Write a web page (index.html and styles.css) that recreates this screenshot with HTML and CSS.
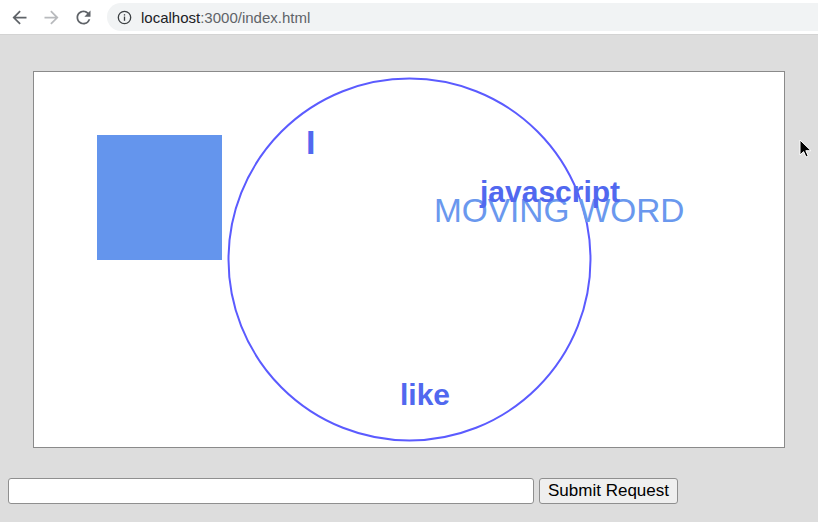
FILE: index.html
```html
<!DOCTYPE html>
<html>
<head>
<meta charset="utf-8">
<link rel="stylesheet" href="styles.css">
</head>
<body>
<div class="chrome">
  <div class="nav">
    <svg class="nav-icon" viewBox="0 0 24 24" width="21" height="21"><path fill="#5f6368" d="M20 11H7.83l5.59-5.59L12 4l-8 8 8 8 1.41-1.41L7.83 13H20v-2z"/></svg>
    <svg class="nav-icon" viewBox="0 0 24 24" width="21" height="21"><path fill="#b8babd" d="M4 11h12.17l-5.59-5.59L12 4l8 8-8 8-1.41-1.41L16.17 13H4v-2z"/></svg>
    <svg class="nav-icon" viewBox="0 0 24 24" width="21" height="21"><path fill="#5f6368" d="M17.65 6.35A7.958 7.958 0 0012 4c-4.42 0-7.99 3.58-7.99 8s3.57 8 7.99 8c3.730 0 6.84-2.55 7.73-6h-2.08A5.99 5.99 0 0112 18c-3.31 0-6-2.69-6-6s2.69-6 6-6c1.66 0 3.14.69 4.22 1.78L13 11h7V4l-2.35 2.35z"/></svg>
  </div>
  <div class="omnibox">
    <svg class="info" viewBox="0 0 16 16" width="15" height="15"><circle cx="8" cy="8" r="6.6" fill="none" stroke="#3c4043" stroke-width="1.4"/><rect x="7.3" y="7" width="1.4" height="4.5" fill="#3c4043"/><rect x="7.3" y="4.5" width="1.4" height="1.4" fill="#3c4043"/></svg>
    <span class="host">localhost</span><span class="path">:3000/index.html</span>
  </div>
</div>
<div class="page">
  <div class="stage">
    <svg class="scene" viewBox="0 0 750 375" width="750" height="375">
      <rect x="63" y="63" width="125" height="125" fill="#6495ed"/>
      <circle cx="375.5" cy="187.5" r="181" fill="none" stroke="#5b5bff" stroke-width="2"/>
      <text class="w-bold" x="272" y="82" font-size="34">I</text>
      <text class="w-moving" x="400" y="150" font-size="33.4">MOVING WORD</text>
      <text class="w-bold" x="446" y="130" font-size="30">javascript</text>
      <text class="w-bold" x="366" y="333" font-size="30">like</text>
    </svg>
  </div>
  <form class="req">
    <input class="req-input" type="text">
    <button class="req-btn" type="button">Submit Request</button>
  </form>
  <svg class="cursor" viewBox="0 0 12 19" width="12" height="19"><path d="M1 1v15l3.6-3.4 2.4 5.4 2.2-1-2.4-5.3H12z" fill="#000" stroke="#fff" stroke-width="1"/></svg>
</div>
</body>
</html>
```
FILE: styles.css
```css
html, body {
  margin: 0;
  padding: 0;
}
body {
  width: 818px;
  height: 522px;
  overflow: hidden;
  background: #dddddd;
  font-family: "Liberation Sans", Arial, sans-serif;
}
.chrome {
  height: 34px;
  background: #ffffff;
  border-bottom: 1px solid #d3d3d3;
  display: flex;
  align-items: center;
}
.nav {
  display: flex;
  align-items: center;
  gap: 11px;
  padding-left: 9px;
  width: 98px;
}
.nav-icon {
  display: block;
}
.omnibox {
  flex: 1;
  height: 28px;
  background: #f1f3f4;
  border-radius: 14px 0 0 14px;
  display: flex;
  align-items: center;
  padding-left: 10px;
  font-size: 15px;
}
.info {
  margin-right: 9px;
}
.host {
  color: #202124;
}
.path {
  color: #5f6368;
}
.page {
  position: relative;
  padding: 36px 8px 0;
  height: 487px;
  box-sizing: border-box;
}
.stage {
  margin-left: 25px;
  width: 750px;
  height: 375px;
  border: 1px solid #8a8a8a;
  background: #ffffff;
}
.scene {
  display: block;
}
.w-bold {
  font-family: "Liberation Sans", Arial, sans-serif;
  font-weight: bold;
  fill: #5168ef;
}
.w-moving {
  font-family: "Liberation Sans", Arial, sans-serif;
  fill: #6a98ee;
}
.req {
  margin-top: 30px;
  display: flex;
  gap: 5px;
}
.req-input {
  width: 526px;
  height: 26px;
  box-sizing: border-box;
  border: 1px solid #8f8f8f;
  border-radius: 3px;
  background: #fff;
  margin: 0;
}
.req-btn {
  width: 139px;
  height: 26px;
  box-sizing: border-box;
  border: 1px solid #8f8f8f;
  border-radius: 3px;
  background: #efefef;
  font-family: "Liberation Sans", Arial, sans-serif;
  font-size: 17px;
  color: #000;
  margin: 0;
  padding: 0;
}
.cursor {
  position: absolute;
  left: 799px;
  top: 104px;
}
```
